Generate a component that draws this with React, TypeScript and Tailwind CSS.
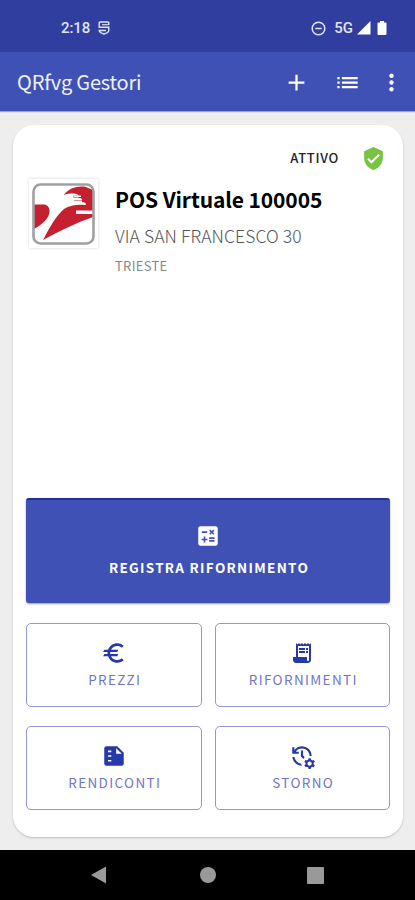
import type { ReactNode } from 'react'
import { MdAdd, MdCalculate, MdEuro, MdList, MdManageHistory, MdMoreVert, MdReceiptLong, MdVerifiedUser } from 'react-icons/md'

function StatusBar() {
  return (
    <div className="flex h-[52px] items-center justify-between bg-[#303f9f] pl-[61px] pr-[28px] pt-[4px] text-[15px] font-medium text-[#e0e4f6] font-[Roboto,sans-serif]">
      <div className="flex items-center gap-[8px]">
        <span className="tracking-[-0.1px]">2:18</span>
        <svg width="12" height="14" viewBox="0 0 12 14" fill="none" stroke="currentColor" strokeWidth="1.4">
          <path d="M10.800 4V2Q10.800 1 9.800 1H2.200Q1.200 1 1.200 2V6.300H10.800V9.500Q10.800 11.500 6 13Q1.200 11.500 1.200 9.500H8" />
          <path d="M4 3.700h6.800" strokeWidth="1.100" />
        </svg>
      </div>
      <div className="flex items-center">
        <svg width="15" height="15" viewBox="0 0 15 15" fill="none" stroke="currentColor" strokeWidth="1.5">
          <circle cx="7.5" cy="7.5" r="6.3" />
          <path d="M4.3 7.5h6.4" />
        </svg>
        <span className="ml-[8px]">5G</span>
        <svg className="ml-[4px]" width="14" height="14" viewBox="0 0 14 14" fill="#fff">
          <path d="M0 13.5L13.5 0v13.5z" />
        </svg>
        <svg className="ml-[6px]" width="10" height="14" viewBox="0 0 10 14" fill="#fff">
          <path d="M3 0h4v1.5h1.5q1 0 1 1V13q0 1-1 1h-7q-1 0-1-1V2.500q0-1 1-1H3z" />
        </svg>
      </div>
    </div>
  )
}

function AppBar() {
  return (
    <header className="flex h-[59px] items-center bg-[#3f51b5] pl-[17px] pr-[10px] pt-[2px] text-white shadow-[0_1px_1px_#9fa3c4]">
      <h1 className="mt-[-1px] flex-1 text-[20px] leading-[26px] tracking-[-0.2px] text-[#eef0fb]">QRfvg Gestori</h1>
      <MdAdd size={27} />
      <MdList size={27} className="ml-[24px]" />
      <MdMoreVert size={27} className="ml-[17px]" />
    </header>
  )
}

function Logo() {
  return (
    <div className="flex h-[69px] w-[69px] shrink-0 items-center justify-center bg-white shadow-[0_0_3px_#d6d6d6]">
      <svg width="63" height="62" viewBox="0 0 63 62">
        <path fill="#c4202f" d="M2 21.500H12C16 22 18 25 17.500 29C17 36 9 42 2 46z" />
        <path fill="#c4202f" d="M11 57C19 42 24 33 32 26C38 22 45 21.500 53 22C55 21.500 54 19.500 50 19H42V17H50C50 15 47 14.500 41.500 14.500V12.500H47C44 10 38 10 31.700 12C37 5 46 2.500 54 4L61 7V27.500H44V31H61V34C44 40 27 48 11 57z" />
        <path stroke="#fff" strokeWidth="1.600" d="M42 13.200H49M39 18.300H50" />
        <rect x="1.500" y="1.500" width="60" height="59" rx="7" fill="none" stroke="#a0a0a0" strokeWidth="2.600" />
      </svg>
    </div>
  )
}

function ReportIcon() {
  return (
    <svg width="26" height="26" viewBox="0 0 24 24">
      <path fill="currentColor" d="M5 3h10l6 6v10q0 2-2 2H5q-2 0-2-2V5q0-2 2-2z" />
      <path fill="#fff" d="M14 4.800V10h5.200zM6.500 7h3v1.500h-3zM6.500 11.300h3v1.500h-3zM6.500 15.600h3v1.500h-3z" />
    </svg>
  )
}

function ActionButton({ icon, label }: { icon: ReactNode; label: string }) {
  return (
    <button className="flex h-[84px] flex-col items-center rounded-[5px] border border-[#9698ce] pt-[16px] text-[#2639a6]">
      <span className="flex h-[26px] items-center">{icon}</span>
      <span className="mt-[3px] pl-[2px] text-[13.5px] leading-[20px] tracking-[1.35px] text-[#7075c6]">{label}</span>
    </button>
  )
}

export default function App() {
  return (
    <div className="flex h-[900px] w-[415px] flex-col overflow-hidden bg-[#eeeeee] font-['Noto_Sans_CJK_SC',sans-serif]">
      <StatusBar />
      <AppBar />

      <main className="flex-1 pl-[13px] pr-[12px] pt-[14px]">
        <div className="flex h-[712px] flex-col rounded-[21px] bg-white px-[13px] pb-[27px] shadow-[0_1px_2px_#bdbdbd]">
          <div className="flex h-[54px] items-center justify-end pt-[12px] pr-[4px]">
            <span className="text-[13px] leading-[20px] font-medium tracking-[0.7px] text-[#222]">ATTIVO</span>
            <MdVerifiedUser size={25} className="ml-[22px] text-[#76c442]" />
          </div>

          <div className="flex pl-[3px]">
            <Logo />
            <div className="pl-[17px]">
              <h2 className="mt-[7px] text-[21px] leading-[26px] font-bold tracking-[-0.1px] text-black">POS Virtuale 100005</h2>
              <p className="mt-[13px] text-[17.500px] leading-[22px] font-light tracking-[0.1px] text-[#555]">VIA SAN FRANCESCO 30</p>
              <p className="mt-[10px] text-[13px] leading-[18px] tracking-[0.3px] text-[#888]">TRIESTE</p>
            </div>
          </div>

          <div className="mt-auto">
            <button className="flex h-[105px] w-full flex-col items-center rounded-[3px] border-t-2 border-[#1c309c] bg-[#3f51b5] pt-[23px] text-white shadow-[0_1px_2px_#999]">
              <MdCalculate size={26} />
              <span className="mt-[8px] pl-[2px] text-[13.500px] leading-[20px] font-bold tracking-[1.3px]">REGISTRA RIFORNIMENTO</span>
            </button>
            <div className="mt-[20px] grid grid-cols-2 gap-x-[13px] gap-y-[19px]">
              <ActionButton icon={<MdEuro size={26} />} label="PREZZI" />
              <ActionButton icon={<MdReceiptLong size={24} />} label="RIFORNIMENTI" />
              <ActionButton icon={<ReportIcon />} label="RENDICONTI" />
              <ActionButton icon={<MdManageHistory size={26} />} label="STORNO" />
            </div>
          </div>
        </div>
      </main>

      <nav className="flex h-[50px] items-center bg-black pl-[90px]">
        <svg width="17" height="18" viewBox="0 0 17 18" fill="#999">
          <path d="M1 9L16 .5v17z" />
        </svg>
        <span className="ml-[93px] size-[16px] rounded-full bg-[#999]" />
        <span className="ml-[91px] size-[17px] rounded-[1px] bg-[#999]" />
      </nav>
    </div>
  )
}
